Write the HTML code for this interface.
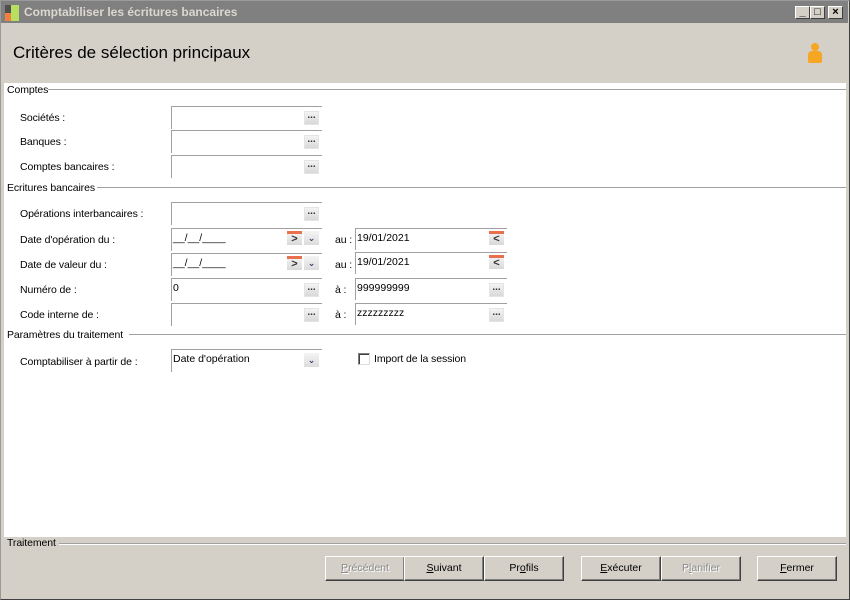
<!DOCTYPE html>
<html><head><meta charset="utf-8"><style>
*{margin:0;padding:0;box-sizing:border-box}
body{width:850px;height:600px;position:relative;background:#d4d0c8;font-family:"Liberation Sans","DejaVu Sans",sans-serif;font-size:10.5px;color:#000;overflow:hidden}
.a{position:absolute}
.win{left:0;top:0;width:850px;height:600px;border:1px solid #9a9a9a;border-right-color:#404040;border-bottom-color:#404040}
.tb{left:1px;top:1px;width:847px;height:22px;background:#808080;color:#dcd8d0;font-weight:bold;font-size:12px;line-height:22px;padding-left:23px}
.wb{top:6px;width:15px;height:13px;background:#d4d0c8;border:1px solid #fff;border-right-color:#404040;border-bottom-color:#404040;font-size:11px;line-height:10px;text-align:center;font-weight:bold;color:#000}
.white{left:4px;top:83px;width:842px;height:454px;background:#fff}
.sec{height:2px;border-top:1px solid #a0a0a0;border-bottom:1px solid #fff}
.lbl{font-size:10.5px;letter-spacing:-0.1px}
.in{width:151px;height:23px;border-top:1px solid #a0a0a0;border-left:1px solid #a0a0a0;background:#fff;padding:3px 0 0 1px}
.in2{width:152px;height:22px;border-top:1px solid #a0a0a0;border-left:1px solid #a0a0a0;background:#fff;padding:3px 0 0 1px}
.dots{width:15px;height:14px;background:linear-gradient(#f4f4f4,#d8d8d8);border:1px solid #e4e4e4;font-size:10px;line-height:8px;text-align:center;color:#333;font-weight:bold;letter-spacing:0}
.cal{width:15px;height:14px;background:linear-gradient(#f0f0f0,#d8d8d8);border-top:3px solid #e8704c;font-size:11px;line-height:10px;text-align:center;color:#333;font-weight:bold}
.dd{width:15px;height:14px;background:linear-gradient(#f4f4f4,#dcdcdc);font-size:9px;line-height:14px;text-align:center;color:#2a3a60;font-weight:bold}
.btn{top:556px;width:80px;height:25px;border:1px solid #fff;border-right-color:#404040;border-bottom-color:#404040;box-shadow:inset -1px -1px #808080;text-align:center;line-height:22px;font-size:10.5px}
.dis{color:#8a8a8a;text-shadow:1px 1px #fff}
</style></head><body>
<div class="a win"></div>
<div class="a tb">Comptabiliser les écritures bancaires</div>
<div class="a" style="left:5px;top:5px;width:6px;height:8px;background:#505050"></div>
<div class="a" style="left:5px;top:13px;width:6px;height:8px;background:#f08040"></div>
<div class="a" style="left:11px;top:5px;width:8px;height:16px;background:#b8e060"></div>
<div class="a wb" style="left:795px">_</div>
<div class="a wb" style="left:810px">□</div>
<div class="a wb" style="left:828px">×</div>
<div class="a" style="left:13px;top:43px;font-size:17px">Critères de sélection principaux</div>
<div class="a" style="left:811px;top:43px;width:8px;height:8px;border-radius:50%;background:#f5a623"></div>
<div class="a" style="left:808px;top:51px;width:14px;height:12px;border-radius:4px 4px 2px 2px;background:#f5a623"></div>
<div class="a white"></div>

<div class="a sec" style="left:48px;top:89px;width:798px"></div>
<div class="a lbl" style="left:7px;top:84px">Comptes</div>
<div class="a sec" style="left:97px;top:187px;width:749px"></div>
<div class="a lbl" style="left:7px;top:182px">Ecritures bancaires</div>
<div class="a sec" style="left:129px;top:334px;width:717px"></div>
<div class="a lbl" style="left:7px;top:329px">Paramètres du traitement</div>

<div class="a lbl" style="left:20px;top:112px">Sociétés :</div>
<div class="a in" style="left:171px;top:106px"></div><div class="a dots" style="left:304px;top:111px">...</div>
<div class="a lbl" style="left:20px;top:136px">Banques :</div>
<div class="a in" style="left:171px;top:130px"></div><div class="a dots" style="left:304px;top:135px">...</div>
<div class="a lbl" style="left:20px;top:161px">Comptes bancaires :</div>
<div class="a in" style="left:171px;top:155px"></div><div class="a dots" style="left:304px;top:160px">...</div>

<div class="a lbl" style="left:20px;top:208px">Opérations interbancaires :</div>
<div class="a in" style="left:171px;top:202px"></div><div class="a dots" style="left:304px;top:207px">...</div>
<div class="a lbl" style="left:20px;top:234px">Date d'opération du :</div>
<div class="a in" style="left:171px;top:228px">__/__/____</div><div class="a cal" style="left:287px;top:231px">&gt;</div><div class="a dd" style="left:304px;top:231px">&#8964;</div>
<div class="a lbl" style="left:335px;top:234px">au :</div>
<div class="a in2" style="left:355px;top:228px">19/01/2021</div><div class="a cal" style="left:489px;top:231px">&lt;</div>
<div class="a lbl" style="left:20px;top:259px">Date de valeur du :</div>
<div class="a in" style="left:171px;top:253px">__/__/____</div><div class="a cal" style="left:287px;top:256px">&gt;</div><div class="a dd" style="left:304px;top:256px">&#8964;</div>
<div class="a lbl" style="left:335px;top:259px">au :</div>
<div class="a in2" style="left:355px;top:252px">19/01/2021</div><div class="a cal" style="left:489px;top:255px">&lt;</div>
<div class="a lbl" style="left:20px;top:284px">Numéro de :</div>
<div class="a in" style="left:171px;top:278px">0</div><div class="a dots" style="left:304px;top:283px">...</div>
<div class="a lbl" style="left:335px;top:284px">à :</div>
<div class="a in2" style="left:355px;top:278px">999999999</div><div class="a dots" style="left:489px;top:283px">...</div>
<div class="a lbl" style="left:20px;top:309px">Code interne de :</div>
<div class="a in" style="left:171px;top:303px"></div><div class="a dots" style="left:304px;top:308px">...</div>
<div class="a lbl" style="left:335px;top:309px">à :</div>
<div class="a in2" style="left:355px;top:303px">zzzzzzzzz</div><div class="a dots" style="left:489px;top:308px">...</div>

<div class="a lbl" style="left:20px;top:356px">Comptabiliser à partir de :</div>
<div class="a in" style="left:171px;top:349px">Date d'opération</div><div class="a dd" style="left:304px;top:353px">&#8964;</div>
<div class="a" style="left:358px;top:353px;width:12px;height:12px;border:1px solid #808080;border-right-color:#ddd;border-bottom-color:#ddd;box-shadow:inset 1px 1px #404040;background:#fff"></div>
<div class="a lbl" style="left:374px;top:353px">Import de la session</div>

<div class="a sec" style="left:59px;top:543px;width:787px"></div>
<div class="a lbl" style="left:7px;top:537px">Traitement</div>

<div class="a btn dis" style="left:325px"><u>P</u>récédent</div>
<div class="a btn" style="left:404px"><u>S</u>uivant</div>
<div class="a btn" style="left:484px">Pr<u>o</u>fils</div>
<div class="a btn" style="left:581px"><u>E</u>xécuter</div>
<div class="a btn dis" style="left:661px">P<u>l</u>anifier</div>
<div class="a btn" style="left:757px"><u>F</u>ermer</div>
</body></html>
